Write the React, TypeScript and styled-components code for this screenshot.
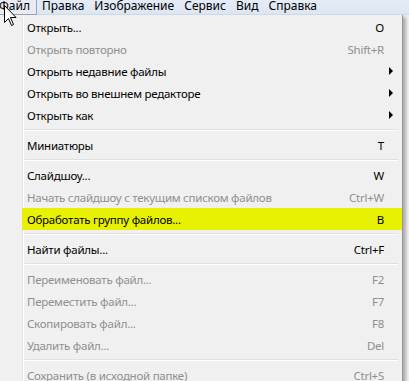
import React from "react";
import styled, { createGlobalStyle } from "styled-components";

const Global = createGlobalStyle`
  html, body { margin: 0; padding: 0; background: #f0f0f0; overflow: hidden; }
  body { font-family: "Noto Sans", "Open Sans", sans-serif; font-size: 11.5px; letter-spacing: -0.25px; color: #000; }
`;

const Page = styled.div`
  position: relative;
  width: 409px;
  height: 381px;
  overflow: hidden;
  background: #f0f0f0;
`;

const MenuBar = styled.div`
  display: flex;
  height: 14px;
  background: linear-gradient(#e4ecf7, #dce6f3);
  border-bottom: 1px solid #d2dbe8;
  align-items: flex-end;
  font-size: 12px;
  letter-spacing: 0;
`;

const BarItem = styled.div<{ $open?: boolean }>`
  padding: 0 ${(p) => (p.$open ? "6px" : "4px")};
  height: 15px;
  line-height: 12px;
  margin-left: ${(p) => (p.$open ? "-8px" : "0")};
  border: 1px solid ${(p) => (p.$open ? "#9ba6b6" : "transparent")};
  border-top: none;
  background: ${(p) => (p.$open ? "#e8ecf2" : "transparent")};
  box-sizing: border-box;
  white-space: nowrap;
  margin-bottom: -1px;
`;

const Popup = styled.div`
  position: relative;
  width: 402px;
  background: #f0f0f0;
  border-right: 1px solid #979797;
  box-shadow: 3px 2px 3px rgba(0, 0, 0, 0.28);
  padding-top: 1px;
  &::before {
    content: "";
    position: absolute;
    left: 22px;
    top: 0;
    bottom: 0;
    width: 1px;
    background: #e2e3e3;
    border-right: 1px solid #ffffff;
  }
`;

const Row = styled.div<{ $disabled?: boolean; $hot?: boolean }>`
  position: relative;
  display: grid;
  grid-template-columns: 1fr auto 18px;
  align-items: center;
  height: 22px;
  margin-left: 22px;
  padding-left: 5px;
  color: ${(p) => (p.$disabled ? "#8f8f8f" : "#000")};
  background: ${(p) => (p.$hot ? "#e8f100" : "transparent")};
  white-space: nowrap;
`;

const Shortcut = styled.span`
  text-align: right;
`;

const Arrow = styled.span`
  justify-self: start;
  margin-left: 5px;
  width: 0;
  height: 0;
  border-top: 4px solid transparent;
  border-bottom: 4px solid transparent;
  border-left: 4px solid #000;
`;

const Separator = styled.div`
  height: 8px;
  display: flex;
  align-items: center;
  margin-left: 25px;
  margin-right: 4px;
  &::after {
    content: "";
    flex: 1;
    height: 1px;
    background: #e0e0e0;
    border-bottom: 1px solid #ffffff;
  }
`;

const Cursor = styled.svg`
  position: absolute;
  left: 4px;
  top: 5px;
`;

type Item = { label: string; key?: string; disabled?: boolean; sub?: boolean; hot?: boolean } | "sep";

const items: Item[] = [
  { label: "Открыть...", key: "O" },
  { label: "Открыть повторно", key: "Shift+R", disabled: true },
  { label: "Открыть недавние файлы", sub: true },
  { label: "Открыть во внешнем редакторе", sub: true },
  { label: "Открыть как", sub: true },
  "sep",
  { label: "Миниатюры", key: "T" },
  "sep",
  { label: "Слайдшоу...", key: "W" },
  { label: "Начать слайдшоу с текущим списком файлов", key: "Ctrl+W", disabled: true },
  { label: "Обработать группу файлов...", key: "B", hot: true },
  "sep",
  { label: "Найти файлы...", key: "Ctrl+F" },
  "sep",
  { label: "Переименовать файл...", key: "F2", disabled: true },
  { label: "Переместить файл...", key: "F7", disabled: true },
  { label: "Скопировать файл...", key: "F8", disabled: true },
  { label: "Удалить файл...", key: "Del", disabled: true },
  "sep",
  { label: "Сохранить (в исходной папке)", key: "Ctrl+S", disabled: true },
];

export default function App() {
  return (
    <Page>
      <Global />
      <MenuBar>
        <BarItem $open>Файл</BarItem>
        <BarItem>Правка</BarItem>
        <BarItem>Изображение</BarItem>
        <BarItem>Сервис</BarItem>
        <BarItem>Вид</BarItem>
        <BarItem>Справка</BarItem>
      </MenuBar>
      <Popup>
        {items.map((it, i) =>
          it === "sep" ? (
            <Separator key={i} />
          ) : (
            <Row key={i} $disabled={it.disabled} $hot={it.hot}>
              <span>{it.label}</span>
              <Shortcut>{it.key}</Shortcut>
              {it.sub ? <Arrow /> : <span />}
            </Row>
          )
        )}
      </Popup>
      <Cursor width="13" height="22" viewBox="0 0 13 22">
        <path d="M0.5 0.5 L0.5 17.5 L4.5 13.5 L7.5 20.5 L9.5 19.5 L6.5 12.5 L12 12.5 Z" fill="#fff" stroke="#000" strokeWidth="1" strokeLinejoin="miter" />
      </Cursor>
    </Page>
  );
}
